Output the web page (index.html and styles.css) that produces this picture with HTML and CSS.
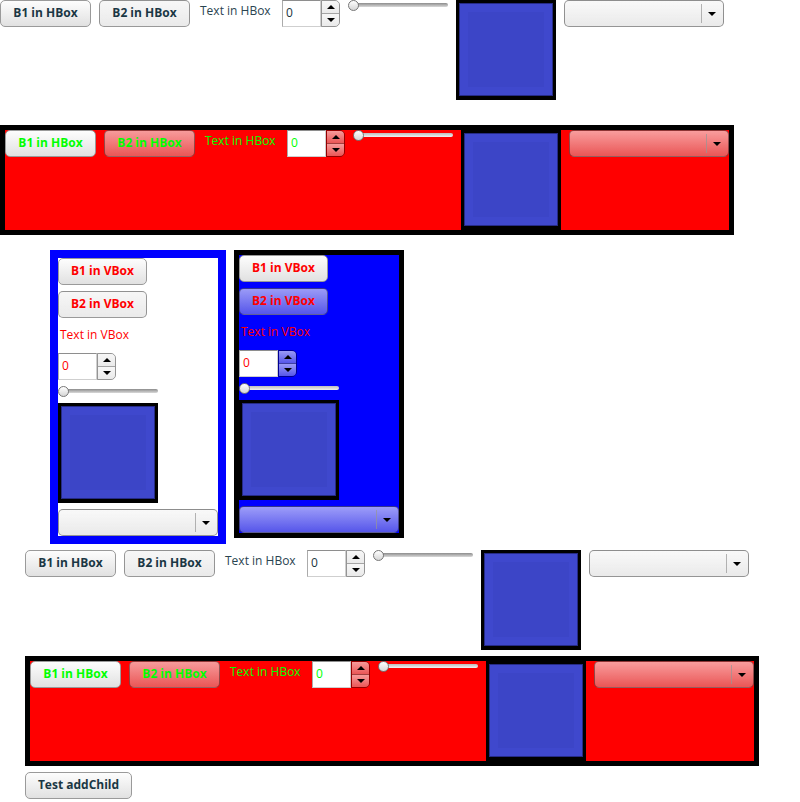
FILE: index.html
```html
<!DOCTYPE html>
<html lang="en">
  <head>
    <meta charset="UTF-8" />
    <title>HBox / VBox test</title>
    <link rel="stylesheet" href="styles.css">
  </head>
  <body>
    <div class="hbox">
      <div class="btn">B1 in HBox</div>
      <div class="btn glass">B2 in HBox</div>
      <div class="label">Text in HBox</div>
      <div class="spinner">
        <span class="spinner-field">0</span>
        <span class="spinner-btns"><span class="spin-up"></span><span class="spin-down"></span></span>
      </div>
      <div class="slider"><span class="slider-track"></span><span class="slider-thumb"></span></div>
      <div class="rect"></div>
      <div class="combo glass"><span class="combo-sep"></span><span class="combo-arrow"></span></div>
    </div>

    <div class="hbox framed green first-framed">
      <div class="btn">B1 in HBox</div>
      <div class="btn glass">B2 in HBox</div>
      <div class="label">Text in HBox</div>
      <div class="spinner">
        <span class="spinner-field">0</span>
        <span class="spinner-btns"><span class="spin-up"></span><span class="spin-down"></span></span>
      </div>
      <div class="slider"><span class="slider-track"></span><span class="slider-thumb"></span></div>
      <div class="rect"></div>
      <div class="combo glass"><span class="combo-sep"></span><span class="combo-arrow"></span></div>
    </div>

    <div class="vbox-pair">
      <div class="vbox outlined red">
        <div class="btn">B1 in VBox</div>
        <div class="btn glass">B2 in VBox</div>
        <div class="label">Text in VBox</div>
        <div class="spinner">
          <span class="spinner-field">0</span>
          <span class="spinner-btns"><span class="spin-up"></span><span class="spin-down"></span></span>
        </div>
        <div class="slider"><span class="slider-track"></span><span class="slider-thumb"></span></div>
        <div class="rect"></div>
        <div class="combo glass"><span class="combo-sep"></span><span class="combo-arrow"></span></div>
      </div>
      <div class="vbox filled red">
        <div class="btn">B1 in VBox</div>
        <div class="btn glass">B2 in VBox</div>
        <div class="label">Text in VBox</div>
        <div class="spinner">
          <span class="spinner-field">0</span>
          <span class="spinner-btns"><span class="spin-up"></span><span class="spin-down"></span></span>
        </div>
        <div class="slider"><span class="slider-track"></span><span class="slider-thumb"></span></div>
        <div class="rect"></div>
        <div class="combo glass"><span class="combo-sep"></span><span class="combo-arrow"></span></div>
      </div>
    </div>

    <div class="nested">
      <div class="hbox">
        <div class="btn">B1 in HBox</div>
        <div class="btn glass">B2 in HBox</div>
        <div class="label">Text in HBox</div>
        <div class="spinner">
          <span class="spinner-field">0</span>
          <span class="spinner-btns"><span class="spin-up"></span><span class="spin-down"></span></span>
        </div>
        <div class="slider"><span class="slider-track"></span><span class="slider-thumb"></span></div>
        <div class="rect"></div>
        <div class="combo glass"><span class="combo-sep"></span><span class="combo-arrow"></span></div>
      </div>

      <div class="hbox framed green">
        <div class="btn">B1 in HBox</div>
        <div class="btn glass">B2 in HBox</div>
        <div class="label">Text in HBox</div>
        <div class="spinner">
          <span class="spinner-field">0</span>
          <span class="spinner-btns"><span class="spin-up"></span><span class="spin-down"></span></span>
        </div>
        <div class="slider"><span class="slider-track"></span><span class="slider-thumb"></span></div>
        <div class="rect"></div>
        <div class="combo glass"><span class="combo-sep"></span><span class="combo-arrow"></span></div>
      </div>

      <div class="btn add-child">Test addChild</div>
    </div>
  </body>
</html>
```

FILE: styles.css
```css
body {
  margin: 0;
  font-family: "Open Sans", "DejaVu Sans", sans-serif;
  font-size: 12px;
  color: #1b3440;
  background: #fff;
}

/* containers */
.hbox {
  display: flex;
  align-items: flex-start;
  gap: 8px;
  width: 724px;
  height: 100px;
}
.framed {
  border: 5px solid #000;
  background: #f00;
  margin-top: 6px;
}
.first-framed {
  margin-top: 25px;
}
.vbox-pair {
  display: flex;
  align-items: flex-start;
  gap: 8px;
  margin-top: 15px;
  padding-left: 50px;
}
.vbox {
  display: flex;
  flex-direction: column;
  align-items: flex-start;
  gap: 6px;
  width: 160px;
  height: 278px;
}
.vbox.outlined {
  border: 8px solid #00f;
  background: #fff;
}
.vbox.filled {
  border: 5px solid #000;
  background: #00f;
}
.nested {
  margin-top: 6px;
  padding-left: 25px;
}

/* buttons */
.btn {
  box-sizing: border-box;
  width: 91px;
  height: 27px;
  padding-bottom: 2px;
  border: 1px solid #9a9a9a;
  border-radius: 5px;
  background: linear-gradient(#fdfdfd, #e1e1e1);
  font-weight: bold;
  line-height: 23px;
  text-align: center;
  color: #1a3744;
}
.btn.glass {
  border-color: rgba(0, 0, 0, 0.38);
  background: linear-gradient(rgba(242, 242, 242, 0.64), rgba(205, 205, 205, 0.42));
}
.vbox .btn {
  width: 89px;
}
.add-child {
  width: 107px;
  margin-top: 6px;
}

/* label */
.label {
  box-sizing: border-box;
  width: 76px;
  padding: 2px 0 0 2px;
  line-height: 17px;
  color: #2a4450;
  white-space: nowrap;
}
.vbox .label {
  height: 23px;
}

/* spinner */
.spinner {
  display: flex;
  width: 58px;
  height: 27px;
}
.spinner-field {
  box-sizing: border-box;
  width: 39px;
  height: 27px;
  padding-left: 3px;
  border: 1px solid #cfcfcf;
  border-top-color: #8e8e8e;
  border-left-color: #ababab;
  background: #fff;
  line-height: 23px;
  color: #1b3440;
}
.spinner-btns {
  box-sizing: border-box;
  display: flex;
  flex-direction: column;
  width: 19px;
  height: 27px;
  border: 1px solid rgba(0, 0, 0, 0.42);
  border-radius: 0 5px 5px 0;
  overflow: hidden;
}
.spin-up,
.spin-down {
  flex: 1;
  display: flex;
  align-items: center;
  justify-content: center;
  background: linear-gradient(rgba(242, 242, 242, 0.64), rgba(205, 205, 205, 0.42));
}
.spin-down {
  border-top: 1px solid rgba(0, 0, 0, 0.3);
}
.spin-up::after,
.spin-down::after {
  content: "";
  border-left: 4px solid transparent;
  border-right: 4px solid transparent;
}
.spin-up::after {
  border-bottom: 4px solid #000;
}
.spin-down::after {
  border-top: 4px solid #000;
}

/* slider */
.slider {
  position: relative;
  width: 100px;
  height: 11px;
}
.slider-track {
  position: absolute;
  left: 5px;
  right: 0;
  top: 3px;
  height: 4px;
  border-radius: 2px;
  background: linear-gradient(#8c8c8c, #d9d9d9);
}
.framed .slider-track,
.filled .slider-track {
  background: linear-gradient(#bdbdbd, #f0f0f0);
}
.slider-thumb {
  position: absolute;
  left: 0;
  top: 0;
  box-sizing: border-box;
  width: 11px;
  height: 11px;
  border: 1px solid #777;
  border-radius: 50%;
  background: linear-gradient(#fff, #d6d6d6);
}

/* rectangle */
.rect {
  box-sizing: border-box;
  flex-shrink: 0;
  width: 100px;
  height: 100px;
  border: 3px solid #000;
  border-bottom-width: 4px;
  background: #3c45c7;
  box-shadow: inset 0 0 0 1px #262b86, inset 0 0 0 9px #3f48cd;
}

/* combo box */
.combo {
  box-sizing: border-box;
  display: flex;
  align-items: center;
  justify-content: flex-end;
  width: 160px;
  height: 27px;
  border: 1px solid rgba(0, 0, 0, 0.4);
  border-radius: 5px;
  background: linear-gradient(rgba(245, 245, 245, 0.64), rgba(205, 205, 205, 0.42));
}
.combo-sep {
  width: 1px;
  height: 19px;
  margin-right: 6px;
  background: rgba(150, 150, 150, 0.7);
}
.combo-arrow {
  margin-right: 7px;
  border-left: 4px solid transparent;
  border-right: 4px solid transparent;
  border-top: 4px solid #000;
}

/* text colour themes */
.green .btn,
.green .label,
.green .spinner-field {
  color: #00ff00;
}
.red .btn,
.red .label,
.red .spinner-field {
  color: #f00;
}
```
